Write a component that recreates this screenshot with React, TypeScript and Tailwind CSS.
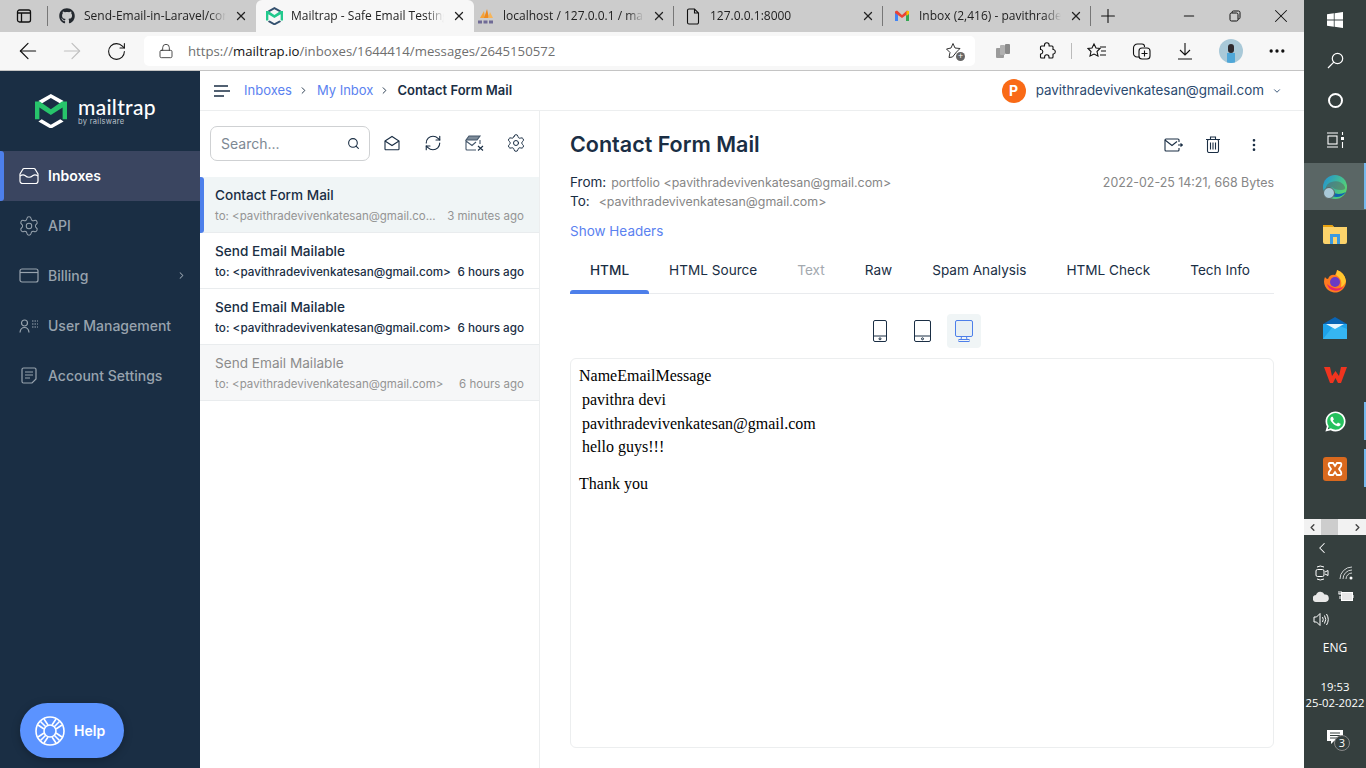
import { ChevronRight, ChevronDown, ChevronLeft, Search, RefreshCw, Settings, MoreVertical, Plus, X, Minus, ArrowLeft, ArrowRight, RotateCw, Lock, Ellipsis } from 'lucide-react'
import { FaGithub, FaWhatsapp } from 'react-icons/fa'
import type { ReactNode } from 'react'

const UI = 'font-["Inter",sans-serif]'
const WIN = 'font-["Open_Sans",sans-serif]'

function MailtrapMark({ width = 16, mono = false }: { width?: number; mono?: boolean }) {
  const chevron = mono ? '#33506e' : '#fff'
  return (
    <svg width={width} height={(width * 103) / 95} viewBox="0 0 95 103" fill="none">
      <path d="M47 0 L85 21 L75 28 L47 12 L20 28 L10 21 Z" fill={chevron} />
      <path d="M10 82 L20 75 L47 91 L75 75 L85 82 L47 103 Z" fill={chevron} />
      <path d="M0 22 L14 22 L47 45 L80 22 L95 22 L95 75 L82 75 L82 40 L47 62 L13 40 L13 75 L0 75 Z" fill={mono ? '#22c98d' : '#27c46b'} />
    </svg>
  )
}

function GmailIcon() {
  return (
    <svg width="16" height="16" viewBox="0 0 16 16">
      <path d="M1 4 L1 13 L4 13 L4 7 Z" fill="#4285f4" />
      <path d="M15 4 L15 13 L12 13 L12 7 Z" fill="#34a853" />
      <path d="M1 3.5 L3 2.5 L8 7 L13 2.5 L15 3.5 L15 5 L8 10 L1 5 Z" fill="#ea4335" />
      <path d="M12.5 3 L15 3 L15 6 L12.5 8 Z" fill="#fbbc04" />
    </svg>
  )
}

function PmaIcon() {
  return (
    <svg width="18" height="18" viewBox="0 0 18 18">
      <path d="M3 11 L7 4 L8 11 Z" fill="#f5a33a" />
      <path d="M7 11 L10 2 L12 11 Z" fill="#ee8a1f" />
      <path d="M11 11 L13 5 L16 11 Z" fill="#f7b55a" />
      <path d="M1 15 h16" stroke="#6f6a96" strokeWidth="3" strokeDasharray="4 1.5" />
    </svg>
  )
}

function FileIcon() {
  return (
    <svg width="14" height="17" viewBox="0 0 14 17" fill="none" stroke="#111" strokeWidth="1.1">
      <path d="M1.5 2.5 a1.5 1.5 0 0 1 1.5 -1.5 h5.5 l4 4 v9.5 a1.5 1.5 0 0 1 -1.5 1.5 h-8 a1.5 1.5 0 0 1 -1.5 -1.5 Z M8.5 1 v4 h4" />
    </svg>
  )
}

function Tab({ width, icon, title, active, sep, iconMargin = 'ml-[10px]' }: { width: string; icon: ReactNode; title: string; active?: boolean; sep?: boolean; iconMargin?: string }) {
  return (
    <div className={`relative flex h-[32px] items-center shrink-0 ${width} ${active ? 'bg-[#f7f7f7] rounded-t-[6px]' : ''}`}>
      <div className={`w-[18px] flex justify-center shrink-0 ${iconMargin}`}>{icon}</div>
      <div className="ml-[8px] flex-1 min-w-0 overflow-hidden whitespace-nowrap text-[12px] text-[#222] [mask-image:linear-gradient(to_right,black_88%,transparent)]">{title}</div>
      <X className="w-[14px] h-[14px] ml-[8px] mr-[8px] shrink-0 text-[#222]" strokeWidth={2.2} />
      {sep && <div className="absolute right-0 top-[6px] h-[20px] w-px bg-[#777]" />}
    </div>
  )
}

function TabStrip() {
  return (
    <div className={`${WIN} h-[32px] bg-[#cccccc] flex items-center`}>
      <div className="w-[47px] flex justify-center shrink-0">
        <svg width="16" height="16" viewBox="0 0 16 16" fill="none" stroke="#111" strokeWidth="1.3">
          <rect x="1.5" y="2" width="13" height="12" rx="2" />
          <path d="M1.5 5 h13 M5.5 5 v9" />
        </svg>
      </div>
      <div className="w-px h-[20px] bg-[#777] shrink-0" />
      <Tab width="w-[208px]" icon={<FaGithub className="w-[16px] h-[16px] text-[#24292f]" />} title="Send-Email-in-Laravel/contact" />
      <Tab width="w-[218px]" active iconMargin="ml-[9px]" icon={<MailtrapMark width={17} mono />} title="Mailtrap - Safe Email Testing" />
      <Tab width="w-[200px]" sep iconMargin="ml-[3px]" icon={<PmaIcon />} title="localhost / 127.0.0.1 / mailtrap" />
      <Tab width="w-[209px]" sep icon={<FileIcon />} title="127.0.0.1:8000" />
      <Tab width="w-[208px]" sep icon={<GmailIcon />} title="Inbox (2,416) - pavithradevi" />
      <div className="flex-1 flex items-center">
        <Plus className="ml-[6px] w-[22px] h-[22px] text-[#111]" strokeWidth={1.2} />
        <div className="ml-auto flex items-center">
          <div className="w-[46px] flex justify-center"><Minus className="w-[16px] h-[16px] text-[#111]" strokeWidth={1.6} /></div>
          <div className="w-[46px] flex justify-center">
            <svg width="12" height="12" viewBox="0 0 12 12" fill="none" stroke="#111" strokeWidth="1">
              <rect x="1" y="3" width="8" height="8" rx="1.5" />
              <path d="M3 3 V2.5 A1.5 1.5 0 0 1 4.5 1 H9.5 A1.5 1.5 0 0 1 11 2.5 V7.5 A1.5 1.5 0 0 1 9 9" />
            </svg>
          </div>
          <div className="w-[46px] flex justify-center"><X className="w-[22px] h-[22px] text-[#111]" strokeWidth={1.1} /></div>
        </div>
      </div>
    </div>
  )
}

function ToolButton({ children, className = 'w-[44px]' }: { children: ReactNode; className?: string }) {
  return <div className={`flex justify-center items-center shrink-0 ${className}`}>{children}</div>
}

function Toolbar() {
  return (
    <div className={`${WIN} h-[39px] bg-[#f7f7f7] border-b border-[#c4c4c4] flex items-center pl-[6px] shrink-0`}>
      <ToolButton><ArrowLeft className="w-[26px] h-[26px] text-[#111]" strokeWidth={1.1} /></ToolButton>
      <ToolButton><ArrowRight className="w-[26px] h-[26px] text-[#c0c0c0]" strokeWidth={1.1} /></ToolButton>
      <ToolButton><RotateCw className="w-[21px] h-[21px] text-[#111]" strokeWidth={1.2} /></ToolButton>
      <div className="ml-[6px] w-[831px] h-[30px] bg-white rounded-[5px] flex items-center shrink-0">
        <Lock className="ml-[14px] w-[16px] h-[16px] text-[#333]" strokeWidth={1.3} />
        <div className="ml-[14px] pt-[1px] text-[13.2px] text-[#6f6f6f] whitespace-nowrap">https://<span className="text-[#111]">mailtrap.io</span>/inboxes/1644414/messages/2645150572</div>
        <div className="ml-auto mr-[12px] relative">
          <svg width="18" height="18" viewBox="0 0 18 18" fill="none" stroke="#333" strokeWidth="1">
            <path d="M8 1.5 L10 6 L15 6.5 L11.5 10 L7.5 15 L4 15.5 L5 10.5 L1.5 7 L6 6 Z" />
          </svg>
          <div className="absolute right-[-2px] bottom-[-1px] w-[9px] h-[9px] rounded-full bg-[#666] text-white text-[9px] leading-[8px] text-center">+</div>
        </div>
      </div>
      <ToolButton className="w-[56px]">
        <svg width="16" height="16" viewBox="0 0 16 16" fill="#9b9b9b">
          <rect x="1" y="5" width="8" height="10" rx="1" />
          <rect x="5" y="2" width="5" height="10" rx="1" fill="#b0b0b0" />
          <rect x="10" y="1" width="5" height="10" rx="1" fill="#8a8a8a" />
        </svg>
      </ToolButton>
      <ToolButton className="w-[32px]">
        <svg width="18" height="18" viewBox="0 0 18 18" fill="none" stroke="#111" strokeWidth="1.1" strokeLinejoin="round">
          <path d="M6.5 3 A2.3 2.3 0 0 1 11.1 3 V4 H14 A1 1 0 0 1 15 5 V7.5 H15.5 A2.3 2.3 0 0 1 15.5 12 H15 V15 A1 1 0 0 1 14 16 H11 V15 A2.2 2.2 0 0 0 6.6 15 V16 H3.5 A1 1 0 0 1 2.5 15 V12 H3 A2.3 2.3 0 0 0 3 7.5 H2.5 V5 A1 1 0 0 1 3.5 4 H6.5 Z" />
        </svg>
      </ToolButton>
      <div className="ml-[8px] mr-[3px] w-px h-[16px] bg-[#bbb]" />
      <ToolButton className="w-[44px]">
        <svg width="20" height="18" viewBox="0 0 20 18" fill="none" stroke="#111" strokeWidth="1.1">
          <path d="M7 2 L9 6 L13 6.5 L10 9.5 L11 14 L7 12 L3 14 L4 9.5 L1 6.5 L5 6 Z" />
          <path d="M13 5 h6 M14 9 h5 M13 13 h6" />
        </svg>
      </ToolButton>
      <ToolButton className="w-[44px]">
        <svg width="19" height="19" viewBox="0 0 19 19" fill="none" stroke="#111" strokeWidth="1.1">
          <path d="M7 15 H5 A3.5 3.5 0 0 1 1.5 11.5 V6 A4 4 0 0 1 5.5 2 H10 A2.5 2.5 0 0 1 12.5 4.5 V5" />
          <rect x="7" y="6" width="11" height="11" rx="3" />
          <path d="M12.5 8.5 v6 M9.5 11.5 h6" />
        </svg>
      </ToolButton>
      <ToolButton className="w-[44px]">
        <svg width="16" height="18" viewBox="0 0 16 18" fill="none" stroke="#111" strokeWidth="1.1">
          <path d="M8 1 V13 M3 8 L8 13 L13 8 M1 17 H15" />
        </svg>
      </ToolButton>
      <ToolButton className="w-[48px]">
        <div className="relative w-[24px] h-[24px] rounded-full bg-[#a9c9d8] overflow-hidden">
          <div className="absolute left-[9px] top-[5px] w-[6px] h-[9px] rounded-full bg-[#2e2a2e]" />
          <div className="absolute left-[8px] top-[14px] w-[8px] h-[10px] bg-[#4fa7d8]" />
        </div>
      </ToolButton>
      <ToolButton className="w-[44px]"><Ellipsis className="w-[20px] h-[20px] text-[#111]" strokeWidth={2} /></ToolButton>
    </div>
  )
}

const navStroke = { fill: 'none', stroke: 'currentColor', strokeWidth: 1.2 }

const NAV = [
  {
    label: 'Inboxes',
    icon: (
      <svg width="20" height="18" viewBox="0 0 20 18" {...navStroke}>
        <path d="M1 7 L4 2 A1.5 1.5 0 0 1 5 1.5 H15 A1.5 1.5 0 0 1 16 2 L19 7 V14 A2.5 2.5 0 0 1 16.5 16.5 H3.5 A2.5 2.5 0 0 1 1 14 Z" />
        <path d="M1 9 Q4 7 6 8.5 Q10 12 14 8.5 Q16 7 19 9" />
      </svg>
    ),
  },
  { label: 'API', icon: <Settings className="w-[22px] h-[22px]" strokeWidth={1.1} /> },
  {
    label: 'Billing',
    arrow: true,
    icon: (
      <svg width="20" height="15" viewBox="0 0 20 15" {...navStroke}>
        <rect x="1" y="1" width="18" height="13" rx="2" />
        <path d="M1 4.5 h18" />
      </svg>
    ),
  },
  {
    label: 'User Management',
    icon: (
      <svg width="20" height="14" viewBox="0 0 20 14" {...navStroke}>
        <circle cx="5.5" cy="4" r="3" />
        <path d="M1 13.5 Q1.5 8.5 5.5 8.5 Q9.5 8.5 10 13.5" />
        <path d="M13 2 h6 M13 5 h6 M13 8 h6" strokeDasharray="1.5 1" />
      </svg>
    ),
  },
  {
    label: 'Account Settings',
    icon: (
      <svg width="16" height="17" viewBox="0 0 16 17" {...navStroke}>
        <path d="M2.5 1 H13.5 A1.5 1.5 0 0 1 15 2.5 V12 L11 16 H2.5 A1.5 1.5 0 0 1 1 14.5 V2.5 A1.5 1.5 0 0 1 2.5 1 Z" />
        <path d="M4 5 h8 M4 8 h8 M4 11 h5" />
      </svg>
    ),
  },
]

function Sidebar() {
  return (
    <aside className="w-[200px] shrink-0 bg-[#1a2e44] flex flex-col relative">
      <div className="h-[80px] flex items-center pl-[35px] shrink-0">
        <MailtrapMark width={32} />
        <div className="ml-[11px] text-white">
          <div className="text-[21px] leading-[20px] font-medium font-['Lato',sans-serif] tracking-[0.3px]">mailtrap</div>
          <div className="text-[7.5px] leading-[9px] text-[#b9c0c9] tracking-[0.3px]">by railsware</div>
        </div>
      </div>
      {NAV.map((item, i) => (
        <div key={item.label} className={`relative h-[50px] pb-[1px] flex items-center shrink-0 ${i === 0 ? 'bg-[#3a4560] text-white' : 'text-[#98a3ae]'}`}>
          {i === 0 && <div className="absolute left-0 top-0 w-[4px] h-[50px] bg-[#4d7fea] rounded-r-[3px]" />}
          <div className="w-[48px] flex justify-center pl-[9px]">{item.icon}</div>
          <div className={`text-[14px] ${i === 0 ? 'font-semibold' : 'font-medium'}`}>{item.label}</div>
          {item.arrow && <ChevronRight className="absolute right-[13px] w-[11px] h-[11px]" strokeWidth={2.2} />}
        </div>
      ))}
      <div className="mt-auto mb-[10px] ml-[20px] w-[104px] h-[55px] rounded-full bg-[#5b93ff] flex items-center pl-[15px] text-white shadow-[0_2px_8px_rgba(0,0,0,0.25)]">
        <svg width="30" height="30" viewBox="0 0 30 30" fill="none" stroke="#fff" strokeWidth="1.6">
          <circle cx="15" cy="15" r="14" />
          <circle cx="15" cy="15" r="6" />
          <path d="M5.5 5.5 L10.5 10.5 M9 3 L13 9 M3 9 L9 13 M24.5 5.5 L19.5 10.5 M21 3 L17 9 M27 9 L21 13 M5.5 24.5 L10.5 19.5 M3 21 L9 17 M9 27 L13 21 M24.5 24.5 L19.5 19.5 M27 21 L21 17 M21 27 L17 21" />
        </svg>
        <span className="ml-[9px] text-[14px] font-semibold">Help</span>
      </div>
    </aside>
  )
}

const MESSAGES = [
  { title: 'Contact Form Mail', to: 'to: <pavithradevivenkatesan@gmail.co...', time: '3 minutes ago', state: 'active' },
  { title: 'Send Email Mailable', to: 'to: <pavithradevivenkatesan@gmail.com>', time: '6 hours ago', state: 'unread' },
  { title: 'Send Email Mailable', to: 'to: <pavithradevivenkatesan@gmail.com>', time: '6 hours ago', state: 'unread' },
  { title: 'Send Email Mailable', to: 'to: <pavithradevivenkatesan@gmail.com>', time: '6 hours ago', state: 'read' },
]

function MessageRow({ title, to, time, state }: { title: string; to: string; time: string; state: string }) {
  const bg = state === 'active' ? 'bg-[#f0f5f6]' : state === 'read' ? 'bg-[#f6f7f8]' : 'bg-white'
  const titleColor = state === 'read' ? 'text-[#8c8c8c] font-normal' : 'text-[#1a2e44] font-medium'
  const subColor = state === 'unread' ? 'text-[#1a2e44] font-medium text-[11.7px]' : 'text-[#949494] text-[11.5px]'
  return (
    <div className={`relative h-[56px] border-b border-[#e9ecee] pl-[15px] pr-[15px] pt-[10px] ${bg}`}>
      {state === 'active' && <div className="absolute left-0 top-0 w-[4px] h-[56px] bg-[#4d7fea] rounded-r-[3px]" />}
      <div className={`text-[13.6px] leading-[17px] ${titleColor}`}>{title}</div>
      <div className={`mt-[4px] flex justify-between leading-[16px] whitespace-nowrap ${subColor}`}>
        <span>{to}</span>
        <span>{time}</span>
      </div>
    </div>
  )
}

function MessageList() {
  return (
    <div className="w-[340px] shrink-0 border-r border-[#eceeef] flex flex-col">
      <div className="h-[66px] pb-[2px] flex items-center pl-[10px] shrink-0">
        <div className="w-[160px] h-[35px] border border-[#cfd1d3] rounded-[7px] flex items-center pl-[10px] pr-[9px]">
          <span className="text-[14px] text-[#7d8893]">Search...</span>
          <Search className="ml-auto w-[13px] h-[13px] text-[#1a2e44]" strokeWidth={2} />
        </div>
        <div className="ml-[13px] w-[18px] flex justify-center text-[#1a2e44]">
          <svg width="16" height="16" viewBox="0 0 16 16" fill="none" stroke="currentColor" strokeWidth="1.1">
            <path d="M1 6 L8 1.5 L15 6 V14 A0.8 0.8 0 0 1 14.2 14.8 H1.8 A0.8 0.8 0 0 1 1 14 Z" />
            <path d="M1 6 L8 10.5 L15 6" />
          </svg>
        </div>
        <div className="ml-[23px] w-[18px] flex justify-center text-[#1a2e44]"><RefreshCw className="w-[18px] h-[18px]" strokeWidth={1.5} /></div>
        <div className="ml-[22px] w-[22px] flex justify-center text-[#44566a]">
          <svg width="20" height="16" viewBox="0 0 20 16" fill="none" stroke="currentColor" strokeWidth="1.1">
            <path d="M1 5 L4 1 H15 L12 5 Z" fill="#7d8b99" />
            <path d="M1 5 V14 A1 1 0 0 0 2 15 H11 M1 6 L7 10.5 L11 7 M15 5 V9" />
            <path d="M13 11 L18 15.5 M18 11 L13 15.5" stroke="#1a2e44" />
          </svg>
        </div>
        <div className="ml-[21px] w-[18px] flex justify-center text-[#1a2e44]"><Settings className="w-[20px] h-[20px] shrink-0" strokeWidth={1.2} /></div>
      </div>
      {MESSAGES.map((m, i) => <MessageRow key={i} {...m} />)}
    </div>
  )
}

const TABS = ['HTML', 'HTML Source', 'Text', 'Raw', 'Spam Analysis', 'HTML Check', 'Tech Info']

function DeviceIcon({ kind }: { kind: 'phone' | 'tablet' | 'desktop' }) {
  if (kind === 'desktop') {
    return (
      <svg width="20" height="22" viewBox="0 0 20 22" fill="none" stroke="#4d7fea" strokeWidth="1">
        <rect x="1.5" y="0.5" width="17" height="16" rx="1.5" fill="#e8f0f4" />
        <path d="M7.5 16.5 L7 20 M12.5 16.5 L13 20" />
        <rect x="5" y="19.5" width="10" height="2" />
      </svg>
    )
  }
  const w = kind === 'phone' ? 14 : 17
  return (
    <svg width={w} height="22" viewBox={`0 0 ${w} 22`} fill="none" stroke="#1a2e44" strokeWidth="1">
      <rect x="0.5" y="0.5" width={w - 1} height="21" rx="1.5" />
      <path d={`M0.5 16 H${w - 0.5}`} />
      <circle cx={w / 2} cy="18.8" r="1" />
    </svg>
  )
}

function MessageView() {
  return (
    <div className="flex-1 min-w-0 px-[30px] flex flex-col">
      <div className="flex items-center h-[27px] mt-[20px]">
        <h1 className="text-[21.5px] font-semibold text-[#1a2e44] leading-[27px]">Contact Form Mail</h1>
        <div className="ml-auto flex items-center text-[#1a2e44]">
          <svg width="19" height="14" viewBox="0 0 19 14" fill="none" stroke="currentColor" strokeWidth="1.1">
            <path d="M15 4 V2 A1 1 0 0 0 14 1 H2 A1 1 0 0 0 1 2 V12 A1 1 0 0 0 2 13 H14 A1 1 0 0 0 15 12 V10" />
            <path d="M1 2 L8 7.5 L13 3.5 M14 7 h4 M16.5 5.5 L18.5 7 L16.5 8.5" />
          </svg>
          <svg className="ml-[22px]" width="16" height="17" viewBox="0 0 16 17" fill="none" stroke="currentColor" strokeWidth="1.1">
            <path d="M1 3.5 H15 M5.5 3.5 V1 H10.5 V3.5" />
            <rect x="2.5" y="3.5" width="11" height="13" rx="1.5" />
            <path d="M5.5 6.5 V13.5 M8 6.5 V13.5 M10.5 6.5 V13.5" />
          </svg>
          <MoreVertical className="ml-[25px] mr-[12px] w-[16px] h-[16px]" strokeWidth={2} />
        </div>
      </div>
      <div className="mt-[15px] flex text-[13.5px] leading-[19px] text-[#1a2e44]">
        <span>From:</span>
        <span className="ml-[5px] text-[12.4px] text-[#868686]">portfolio &lt;pavithradevivenkatesan@gmail.com&gt;</span>
        <span className="ml-auto text-[12.4px] text-[#868686]">2022-02-25 14:21, 668 Bytes</span>
      </div>
      <div className="flex text-[13.5px] leading-[19px] text-[#1a2e44]">
        <span>To:</span>
        <span className="ml-[9px] text-[12.4px] text-[#868686]">&lt;pavithradevivenkatesan@gmail.com&gt;</span>
      </div>
      <div className="mt-[11px] text-[13.5px] leading-[19px] text-[#5b82f0]">Show Headers</div>
      <div className="mt-[10px] h-[43px] border-b border-[#e9ebee] flex shrink-0">
        {TABS.map((t, i) => (
          <div key={t} className={`relative px-[20px] pt-[11px] text-[13.6px] leading-[17px] whitespace-nowrap ${i === 0 ? 'font-medium text-[#1a2e44]' : i === 2 ? 'text-[#a3a9af]' : 'text-[#1a2e44]'}`}>
            {t}
            {i === 0 && <div className="absolute left-0 right-0 bottom-[-1px] h-[4px] bg-[#4d7fea] rounded-t-[3px]" />}
          </div>
        ))}
      </div>
      <div className="mt-[20px] h-[34px] flex items-center justify-center shrink-0">
        <div className="w-[34px] flex justify-center"><DeviceIcon kind="phone" /></div>
        <div className="ml-[8px] w-[34px] flex justify-center"><DeviceIcon kind="tablet" /></div>
        <div className="ml-[8px] w-[34px] h-[34px] rounded-[4px] bg-[#f0f5f6] flex items-center justify-center"><DeviceIcon kind="desktop" /></div>
      </div>
      <div className="mt-[10px] h-[390px] border border-[#eceeef] rounded-[6px] p-[8px] font-['Liberation_Serif',serif] text-[16px] text-black">
        <div className="leading-[18px]">NameEmailMessage</div>
        <div className="mt-[3px] pl-[3px] leading-[23.6px]">
          <div>pavithra devi</div>
          <div>pavithradevivenkatesan@gmail.com</div>
          <div>hello guys!!!</div>
        </div>
        <div className="mt-[16px] leading-[18px]">Thank you</div>
      </div>
    </div>
  )
}

function MailtrapPage() {
  return (
    <div className={`${UI} flex-1 min-h-0 flex bg-white`}>
      <Sidebar />
      <div className="flex-1 min-w-0 flex flex-col">
        <div className="h-[40px] shrink-0 border-b border-[#eceeef] flex items-center pl-[14px] pr-[22px] text-[13px]">
          <svg width="16" height="12" viewBox="0 0 16 12" fill="none" stroke="#1a2e44" strokeWidth="1.6">
            <path d="M0 1 h14 M0 6 h16 M0 11 h10" />
          </svg>
          <span className="ml-[14px] text-[#5b82f0]">Inboxes</span>
          <ChevronRight className="mx-[6px] w-[11px] h-[11px] text-[#1a2e44]" strokeWidth={2} />
          <span className="ml-[2px] text-[#5b82f0]">My Inbox</span>
          <ChevronRight className="mx-[6px] w-[11px] h-[11px] text-[#1a2e44]" strokeWidth={2} />
          <span className="ml-[1px] font-semibold text-[#1a2e44]">Contact Form Mail</span>
          <div className="ml-auto flex items-center">
            <div className="w-[24px] h-[24px] rounded-full bg-[#f96a16] text-white text-[14px] font-bold flex items-center justify-center">P</div>
            <span className="ml-[10px] text-[13.4px] text-[#2b4a6f]">pavithradevivenkatesan@gmail.com</span>
            <ChevronDown className="ml-[8px] w-[10px] h-[10px] text-[#2b4a6f]" strokeWidth={2.2} />
          </div>
        </div>
        <div className="flex-1 min-h-0 flex">
          <MessageList />
          <MessageView />
        </div>
      </div>
    </div>
  )
}

function TaskItem({ children, active, running }: { children: ReactNode; active?: boolean; running?: boolean }) {
  return (
    <div className={`relative h-[47px] flex items-center justify-center ${active ? 'bg-[#5a6665]' : ''}`}>
      {children}
      {active && <div className="absolute right-0 top-0 h-[46px] w-[2px] bg-[#76b9ed]" />}
      {running && <div className="absolute right-0 top-[4px] h-[38px] w-[2px] bg-[#76b9ed]" />}
    </div>
  )
}

function Taskbar() {
  return (
    <div className={`${WIN} w-[62px] shrink-0 h-full bg-[#353f3e] flex flex-col text-white`}>
      <div className="h-[40px] flex items-center justify-center">
        <svg width="16" height="16" viewBox="0 0 16 16" fill="#fff"><path d="M0 2.3 L6.8 1.3 V7.6 H0 Z M7.6 1.2 L16 0 V7.6 H7.6 Z M0 8.4 H6.8 V14.7 L0 13.7 Z M7.6 8.4 H16 V16 L7.6 14.8 Z" /></svg>
      </div>
      <div className="h-[40px] flex items-center justify-center">
        <svg width="17" height="17" viewBox="0 0 17 17" fill="none" stroke="#fff" strokeWidth="1.2"><circle cx="10.5" cy="6.5" r="5.2" /><path d="M6.8 10.2 L1 16" /></svg>
      </div>
      <div className="h-[40px] flex items-center justify-center">
        <div className="w-[15px] h-[15px] rounded-full border-[2px] border-white" />
      </div>
      <div className="h-[40px] flex items-center justify-center">
        <svg width="17" height="16" viewBox="0 0 17 16" fill="none" stroke="#fff" strokeWidth="1.1"><path d="M0 1 h11 M0 15 h11" /><rect x="1" y="4" width="9" height="8" /><path d="M15.5 0 v3 M15.5 10 v6" /><rect x="14" y="5" width="3" height="3" fill="#fff" stroke="none" /></svg>
      </div>
      <div className="h-[3px]" />
      <TaskItem active>
        <div className="relative w-[24px] h-[24px]">
          <svg width="24" height="24" viewBox="0 0 24 24">
            <defs>
              <linearGradient id="edgeTop" x1="0" y1="0" x2="1" y2="0.6">
                <stop offset="0" stopColor="#1f8fd8" />
                <stop offset="1" stopColor="#58d66f" />
              </linearGradient>
            </defs>
            <circle cx="12" cy="12" r="12" fill="url(#edgeTop)" />
            <path d="M3 15 A9.5 7 0 0 1 22 12 Q23 15 18 15 Q11 15 9 12 Q5 12 3 15 Z" fill="#5a6665" opacity="0.55" />
            <path d="M2 14 A12 12 0 0 0 23 17 Q15 21 10 17 Q7 14 2 14 Z" fill="#0f62b0" />
          </svg>
          <div className="absolute left-0 top-[12px] w-[12px] h-[12px] rounded-full bg-[#a9c9d8] border border-[#5a6665]" />
        </div>
      </TaskItem>
      <TaskItem>
        <svg width="24" height="20" viewBox="0 0 24 20"><path d="M0 3 A2 2 0 0 1 2 1 H9 L11 3 H24 V18 A2 2 0 0 1 22 20 H2 A2 2 0 0 1 0 18 Z" fill="#fcd36b" /><path d="M0 1 H9 L11 3 H0 Z" fill="#e8a10f" /><rect x="7" y="10" width="10" height="10" fill="#3b9ae0" /><rect x="10" y="13" width="4" height="7" fill="#fcd36b" /></svg>
      </TaskItem>
      <TaskItem>
        <svg width="24" height="24" viewBox="0 0 24 24">
          <path d="M14 1 Q22 4 23 12 A11 11 0 1 1 2 8 Q3 10 5 10 Q7 5 12 6 Q14 3 14 1 Z" fill="#ff7a1f" />
          <path d="M14 1 Q22 4 23 12 Q22 16 18 18 Q20 10 13 6 Q14 3 14 1 Z" fill="#ffc62e" />
          <path d="M4 15 A9 9 0 0 0 20 18 Q12 22 4 15 Z" fill="#e8246c" />
          <circle cx="12" cy="13" r="5" fill="#6a3bc4" />
        </svg>
      </TaskItem>
      <TaskItem>
        <svg width="24" height="22" viewBox="0 0 24 22"><path d="M0 7 L12 0 L24 7 Z" fill="#0a64b4" /><rect y="7" width="24" height="15" fill="#1ea2ea" /><path d="M0 22 L24 22 L24 12 L12 7 Z" fill="#35b5f2" /><path d="M3 7 H21 L12 12 Z" fill="#e8f4fb" /></svg>
      </TaskItem>
      <TaskItem>
        <svg width="23" height="18" viewBox="0 0 23 18"><path d="M0 1 H6 L8 10 L11.5 5 L15 10 L17 1 H23 L17 17 H14 L11.5 12 L9 17 H6 Z" fill="#f0341f" /></svg>
      </TaskItem>
      <TaskItem running>
        <div className="relative w-[23px] h-[23px] flex items-center justify-center">
          <div className="absolute inset-[2px] rounded-full bg-[#25c15e]" />
          <FaWhatsapp className="relative w-[23px] h-[23px] text-white" />
        </div>
      </TaskItem>
      <TaskItem running>
        <div className="w-[24px] h-[24px] rounded-[3px] bg-[#d9691e] flex items-center justify-center">
          <svg width="16" height="16" viewBox="0 0 16 16" fill="none" stroke="#fff" strokeWidth="1.8"><path d="M3 2 H6 L8 5 L10 2 H13 Q15 2 14 5 L12 8 L14 11 Q15 14 13 14 H10 L8 11 L6 14 H3 Q1 14 2 11 L4 8 L2 5 Q1 2 3 2 Z" /></svg>
        </div>
      </TaskItem>
      <div className="mt-[27px] h-[16px] bg-[#f2f2f2] flex items-center justify-between text-[#444]">
        <ChevronLeft className="w-[11px] h-[11px] ml-[3px]" strokeWidth={3} />
        <div className="absolute ml-[17px] w-[17px] h-[16px] bg-[#cdcdcd]" />
        <ChevronRight className="w-[11px] h-[11px] mr-[3px]" strokeWidth={3} />
      </div>
      <div className="mt-[5px] h-[16px] pl-[9px] flex items-center"><ChevronLeft className="w-[18px] h-[18px]" strokeWidth={1.4} /></div>
      <div className="mt-[8px] h-[18px] flex items-center justify-between pl-[11px] pr-[13px]">
        <svg width="14" height="16" viewBox="0 0 14 16" fill="none" stroke="#fff" strokeWidth="1"><path d="M2 2 Q5 0 9 2 M2 14 Q5 16 9 14" /><rect x="1" y="4.5" width="8" height="7" rx="1.5" /><path d="M10 7 L13 5.5 V10.5 L10 9" /></svg>
        <svg width="14" height="14" viewBox="0 0 14 14" fill="none" stroke="#d0d4d4" strokeWidth="1"><path d="M1 13 A12 12 0 0 1 13 1 M4 13 A9 9 0 0 1 13 4 M7 13 A6 6 0 0 1 13 7" /><circle cx="12" cy="12" r="1.5" fill="#fff" stroke="none" /></svg>
      </div>
      <div className="mt-[5px] h-[18px] flex items-center justify-between pl-[9px] pr-[12px]">
        <svg width="16" height="11" viewBox="0 0 16 11" fill="#e8e8e8"><path d="M3.5 11 A3.5 3.5 0 0 1 3 4 A4.5 4.5 0 0 1 11.5 3.5 A3.7 3.7 0 0 1 12.5 11 Z" /></svg>
        <svg width="16" height="12" viewBox="0 0 16 12" fill="none" stroke="#fff" strokeWidth="1"><rect x="3.5" y="2.5" width="11" height="8" fill="#e8e8e8" /><path d="M15 5 v3 M1 1 v3 M3 1 v3 M0.5 4 h3 M2 6 v3" /></svg>
      </div>
      <div className="mt-[5px] h-[18px] pl-[9px] flex items-center">
        <svg width="17" height="15" viewBox="0 0 17 15" fill="none" stroke="#fff" strokeWidth="1"><path d="M1 5 H3.5 L7 1.5 V13.5 L3.5 10 H1 Z M9.5 5 Q11 7.5 9.5 10 M11.5 3.5 Q14 7.5 11.5 11.5 M13.5 2 Q17 7.5 13.5 13" /></svg>
      </div>
      <div className="mt-[12px] text-center text-[12px] leading-[16px]">ENG</div>
      <div className="mt-[23px] text-center text-[11.3px] leading-[16px]">19:53</div>
      <div className="text-center text-[11.3px] leading-[16px] whitespace-nowrap">25-02-2022</div>
      <div className="relative mt-[19px] h-[20px] ml-[23px]">
        <svg width="16" height="15" viewBox="0 0 16 15" fill="#fff"><path d="M0 0 H16 V11 H7 L4 14 V11 H0 Z" /><path d="M3 3 h10 M3 5.5 h10 M3 8 h7" stroke="#353f3e" strokeWidth="1" /></svg>
        <div className="absolute left-[7px] top-[5px] w-[16px] h-[16px] rounded-full bg-[#353f3e] border border-[#888] text-[11px] leading-[14px] text-center">3</div>
      </div>
    </div>
  )
}

export default function App() {
  return (
    <div className="h-[768px] w-[1366px] flex overflow-hidden">
      <div className="w-[1304px] shrink-0 h-full flex flex-col">
        <TabStrip />
        <Toolbar />
        <MailtrapPage />
      </div>
      <Taskbar />
    </div>
  )
}
